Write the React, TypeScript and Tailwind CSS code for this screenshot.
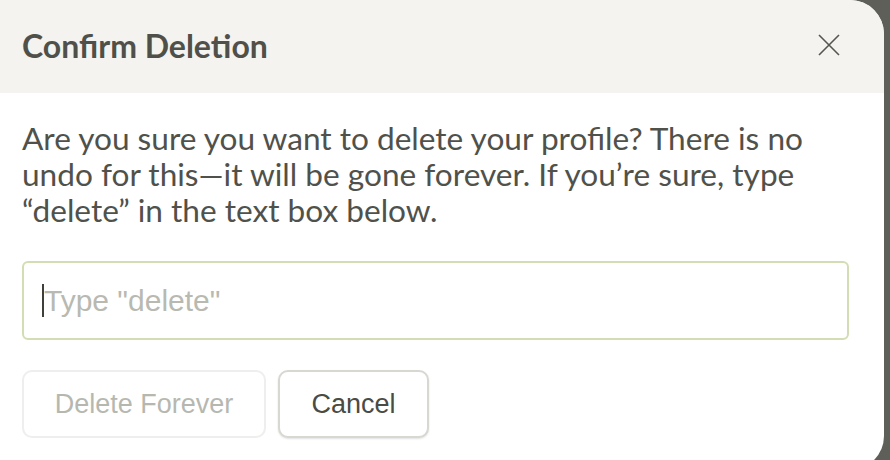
import React from 'react';

const App: React.FC = () => (
    <div className="w-[890px] h-[460px] overflow-hidden bg-[#5d5f58] flex">
        <div className="w-[884px] h-[470px] bg-white rounded-tr-[34px] rounded-br-[34px] overflow-hidden flex flex-col">
            {/* header */}
            <div className="h-[93px] bg-[#f4f3ef] flex items-center justify-between pl-[22px] pr-[44px]">
                <h2 className="text-[32px] font-bold text-[#4f504a] [font-family:Lato,sans-serif] -mt-[2px]">Confirm Deletion</h2>
                <svg width="22" height="22" viewBox="0 0 22 22" className="text-[#55564f] -mt-[4px]">
                    <path d="M1 1L21 21M21 1L1 21" stroke="currentColor" strokeWidth="1.6" fill="none" />
                </svg>
            </div>
            {/* body */}
            <div className="px-[22px] pt-[27px]">
                <p className="text-[31.6px] leading-[36px] text-[#50514b] [font-family:Lato,sans-serif] w-[830px]">
                    Are you sure you want to delete your profile? There is no undo for this—it will be gone forever. If you’re sure, type “delete” in the text box below.
                </p>
                <div className="relative mt-[33px] w-[827px]">
                    <input
                        type="text"
                        placeholder='Type "delete"'
                        className="w-full h-[79px] border-2 border-[#d3ddb3] rounded-[6px] pl-[20px] text-[30px] text-[#4f504a] placeholder:text-[#b8b9b1] outline-none [font-family:'Liberation_Sans',Arial,sans-serif]"
                    />
                    <span className="absolute left-[20px] top-[23px] w-[2px] h-[33px] bg-[#3f403a]" />
                </div>
                <div className="flex gap-[12px] mt-[30px]">
                    <button className="w-[244px] h-[68px] border-2 border-[#eeeeec] rounded-[10px] text-[27px] text-[#b6b8b0] bg-white [font-family:'Liberation_Sans',Arial,sans-serif]">
                        Delete Forever
                    </button>
                    <button className="w-[151px] h-[68px] border-2 border-[#d8d8d2] rounded-[10px] text-[27px] text-[#4a4b45] bg-white shadow-[0_1px_2px_rgba(0,0,0,0.12)] [font-family:'Liberation_Sans',Arial,sans-serif]">
                        Cancel
                    </button>
                </div>
            </div>
        </div>
    </div>
);

export default App;
